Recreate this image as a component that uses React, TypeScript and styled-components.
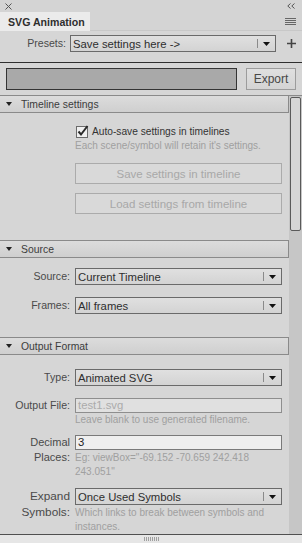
import React from "react";
import styled, { createGlobalStyle } from "styled-components";

const GlobalStyle = createGlobalStyle`
  html, body { margin: 0; padding: 0; background: #d6d6d6; }
  * { box-sizing: border-box; }
  body { font-family: "Liberation Sans", Arial, sans-serif; }
`;

const Panel = styled.div`
  width: 302px;
  height: 543px;
  display: flex;
  flex-direction: column;
  background: #d6d6d6;
  overflow: hidden;
  color: #333;
  font-size: 11px;
`;

const TitleBar = styled.div`
  height: 12px;
  flex: none;
  display: flex;
  align-items: center;
  justify-content: space-between;
  padding: 0 7px 0 5px;
  background: #d4d4d4;
`;

const TabRow = styled.div`
  height: 19px;
  flex: none;
  display: flex;
`;

const Tab = styled.div`
  width: 90px;
  background: #ebebeb;
  font-weight: bold;
  font-size: 10.6px;
  color: #2e2e2e;
  display: flex;
  align-items: center;
  padding-left: 8px;
  white-space: nowrap;
`;

const TabFill = styled.div`
  flex: 1;
  display: flex;
  align-items: center;
  justify-content: flex-end;
  padding-right: 6px;
  background: #d4d4d4;
  border-bottom: 1px solid #c8c8c8;
`;

const PresetsBar = styled.div`
  height: 32px;
  flex: none;
  display: grid;
  grid-template-columns: 66px 206px 1fr;
  column-gap: 4px;
  align-items: start;
  padding-top: 4px;
  border-bottom: 1px solid #2f2f2f;
`;

const BarLabel = styled.span`
  text-align: right;
  line-height: 17px;
  color: #4a4a4a;
  font-size: 10.6px;
`;

const PlusCell = styled.div`
  height: 17px;
  display: flex;
  align-items: center;
  justify-content: center;
`;

const ExportBar = styled.div`
  height: 32px;
  flex: none;
  display: flex;
  align-items: flex-start;
  gap: 9px;
  padding: 5px 6px 0 6px;
`;

const ProgressTrack = styled.div`
  flex: 1;
  height: 22px;
  border: 1px solid #343434;
  background: #a9a9a9;
`;

const ExportButton = styled.div`
  width: 50px;
  height: 22px;
  border: 1px solid #9c9c9c;
  background: linear-gradient(#e0e0e0, #d4d4d4);
  display: flex;
  align-items: center;
  justify-content: center;
  font-size: 12px;
  color: #484848;
`;

const ScrollArea = styled.div`
  flex: 1;
  display: flex;
  min-height: 0;
`;

const Content = styled.div`
  flex: 1;
  overflow: hidden;
`;

const Scrollbar = styled.div`
  width: 13px;
  flex: none;
  background: #c6c6c6;
  padding: 1px 1px 0 1px;
  border-top: 1px solid #8a8a8a;
`;

const Thumb = styled.div`
  height: 134px;
  border: 1px solid #5a5a5a;
  border-radius: 2px;
  background: #d6d6d6;
`;

const SectionHeader = styled.div`
  height: 18px;
  display: flex;
  align-items: center;
  gap: 9px;
  padding-left: 6px;
  border: 1px solid #8a8a8a;
  border-left: none;
  background: linear-gradient(#dcdcdc, #cfcfcf);
  color: #3c3c3c;
  font-size: 10.4px;
`;

const SectionBody = styled.div<{ $top: number; $bottom: number; $left?: number }>`
  padding: ${(p) => p.$top}px 7px ${(p) => p.$bottom}px ${(p) => p.$left ?? 0}px;
  display: flex;
  flex-direction: column;
`;

const CheckRow = styled.label`
  display: flex;
  align-items: center;
  gap: 3px;
  height: 12px;
  margin-left: 1px;
  color: #333;
  font-size: 10.2px;
`;

const Hint = styled.div<{ $top?: number; $lh?: number }>`
  margin-top: ${(p) => p.$top ?? 0}px;
  color: #a0a0a0;
  font-size: 10px;
  line-height: ${(p) => p.$lh ?? 13}px;
  white-space: nowrap;
`;

const WideButton = styled.div<{ $top: number }>`
  margin-top: ${(p) => p.$top}px;
  height: 21px;
  border: 1px solid #ababab;
  background: #d9d9d9;
  color: #a8a8a8;
  display: flex;
  align-items: center;
  justify-content: center;
  font-size: 11.5px;
`;

const FormRow = styled.div<{ $top?: number }>`
  display: grid;
  grid-template-columns: 70px 1fr;
  column-gap: 5px;
  margin-top: ${(p) => p.$top ?? 0}px;
`;

const RowLabel = styled.div<{ $lh?: number; $size?: number }>`
  text-align: right;
  color: #4a4a4a;
  font-size: ${(p) => p.$size ?? 10.6}px;
  line-height: ${(p) => p.$lh ?? 17}px;
  white-space: nowrap;
`;

const ControlCol = styled.div`
  display: flex;
  flex-direction: column;
  min-width: 0;
`;

const SelectBox = styled.div`
  height: 17px;
  border: 1px solid #6a6a6a;
  background: linear-gradient(#e0e0e0, #d3d3d3);
  display: flex;
  align-items: center;
  color: #2e2e2e;
  font-size: 11.3px;
`;

const SelectValue = styled.span`
  flex: 1;
  padding-left: 2px;
  white-space: nowrap;
  overflow: hidden;
`;

const SelectArrow = styled.span`
  width: 18px;
  align-self: stretch;
  margin: 3px 0;
  border-left: 1px solid #8a8a8a;
  display: flex;
  align-items: center;
  justify-content: center;
`;

const TextInput = styled.div<{ $light?: boolean }>`
  height: 15px;
  border: 1px solid ${(p) => (p.$light ? "#7a7a7a" : "#8e8e8e")};
  background: ${(p) => (p.$light ? "#efefef" : "#e0e0e0")};
  color: ${(p) => (p.$light ? "#222" : "#ababab")};
  font-size: 11.3px;
  line-height: 13px;
  padding-left: 2px;
`;

const Footer = styled.div`
  height: 9px;
  flex: none;
  border-top: 1px solid #505050;
  background: #e6e6e6;
  display: flex;
  align-items: center;
  justify-content: center;
  gap: 1px;
`;

const GripLine = styled.span`
  width: 1px;
  height: 4px;
  background: #a0a0a0;
`;

const Caret = () => (
  <svg width="6" height="4" viewBox="0 0 6 4">
    <path d="M0 0 H6 L3 4 Z" fill="#222" />
  </svg>
);

const Triangle = () => (
  <svg width="7" height="4" viewBox="0 0 7 4">
    <path d="M0 0 H7 L3.5 4 Z" fill="#111" />
  </svg>
);

const Select = ({ value }: { value: string }) => (
  <SelectBox>
    <SelectValue>{value}</SelectValue>
    <SelectArrow>
      <Triangle />
    </SelectArrow>
  </SelectBox>
);

const CheckIcon = () => (
  <svg width="13" height="13" viewBox="0 0 13 13">
    <rect x="0.5" y="1.5" width="11" height="11" fill="#f0f0f0" stroke="#6b6b6b" />
    <path d="M2.5 6.5 L5 9.5 L11.5 1" fill="none" stroke="#2a2a2a" strokeWidth="2" />
  </svg>
);

export default function App() {
  return (
    <>
      <GlobalStyle />
      <Panel>
        <TitleBar>
          <svg width="7" height="7" viewBox="0 0 7 7">
            <path d="M0.5 0.5 L6.5 6.5 M6.5 0.5 L0.5 6.5" stroke="#555" strokeWidth="1" />
          </svg>
          <svg width="8" height="6" viewBox="0 0 8 6">
            <path d="M3.5 0.5 L0.8 3 L3.5 5.5 M7.5 0.5 L4.8 3 L7.5 5.5" fill="none" stroke="#555" strokeWidth="1" />
          </svg>
        </TitleBar>
        <TabRow>
          <Tab>SVG Animation</Tab>
          <TabFill>
            <svg width="11" height="7" viewBox="0 0 11 7">
              <path d="M0 0.5 H11 M0 2.5 H11 M0 4.5 H11 M0 6.5 H11" stroke="#666" strokeWidth="1" />
            </svg>
          </TabFill>
        </TabRow>
        <PresetsBar>
          <BarLabel>Presets:</BarLabel>
          <Select value="Save settings here ->" />
          <PlusCell>
            <svg width="9" height="9" viewBox="0 0 9 9">
              <path d="M4.5 0 V9 M0 4.5 H9" stroke="#444" strokeWidth="1.6" />
            </svg>
          </PlusCell>
        </PresetsBar>
        <ExportBar>
          <ProgressTrack />
          <ExportButton>Export</ExportButton>
        </ExportBar>
        <ScrollArea>
          <Content>
            <SectionHeader>
              <Caret />
              Timeline settings
            </SectionHeader>
            <SectionBody $top={12} $bottom={26} $left={75}>
              <CheckRow>
                <CheckIcon />
                Auto-save settings in timelines
              </CheckRow>
              <Hint $top={2}>Each scene/symbol will retain it's settings.</Hint>
              <WideButton $top={11}>Save settings in timeline</WideButton>
              <WideButton $top={9}>Load settings from timeline</WideButton>
            </SectionBody>

            <SectionHeader>
              <Caret />
              Source
            </SectionHeader>
            <SectionBody $top={10} $bottom={23}>
              <FormRow>
                <RowLabel>Source:</RowLabel>
                <Select value="Current Timeline" />
              </FormRow>
              <FormRow $top={12}>
                <RowLabel>Frames:</RowLabel>
                <Select value="All frames" />
              </FormRow>
            </SectionBody>

            <SectionHeader>
              <Caret />
              Output Format
            </SectionHeader>
            <SectionBody $top={14} $bottom={0}>
              <FormRow>
                <RowLabel>Type:</RowLabel>
                <Select value="Animated SVG" />
              </FormRow>
              <FormRow $top={12}>
                <RowLabel $lh={15}>Output File:</RowLabel>
                <ControlCol>
                  <TextInput>test1.svg</TextInput>
                  <Hint>Leave blank to use generated filename.</Hint>
                </ControlCol>
              </FormRow>
              <FormRow $top={9}>
                <RowLabel $lh={15} $size={11}>
                  Decimal
                  <br />
                  Places:
                </RowLabel>
                <ControlCol>
                  <TextInput $light>3</TextInput>
                  <Hint $top={1} $lh={13.5}>
                    Eg: viewBox="-69.152 -70.659 242.418
                    <br />
                    243.051"
                  </Hint>
                </ControlCol>
              </FormRow>
              <FormRow $top={10}>
                <RowLabel $lh={16} $size={11.8}>
                  Expand
                  <br />
                  Symbols:
                </RowLabel>
                <ControlCol>
                  <Select value="Once Used Symbols" />
                  <Hint $top={1} $lh={14}>
                    Which links to break between symbols and
                    <br />
                    instances.
                  </Hint>
                </ControlCol>
              </FormRow>
            </SectionBody>
          </Content>
          <Scrollbar>
            <Thumb />
          </Scrollbar>
        </ScrollArea>
        <Footer>
          {Array.from({ length: 8 }).map((_, i) => (
            <GripLine key={i} />
          ))}
        </Footer>
      </Panel>
    </>
  );
}
